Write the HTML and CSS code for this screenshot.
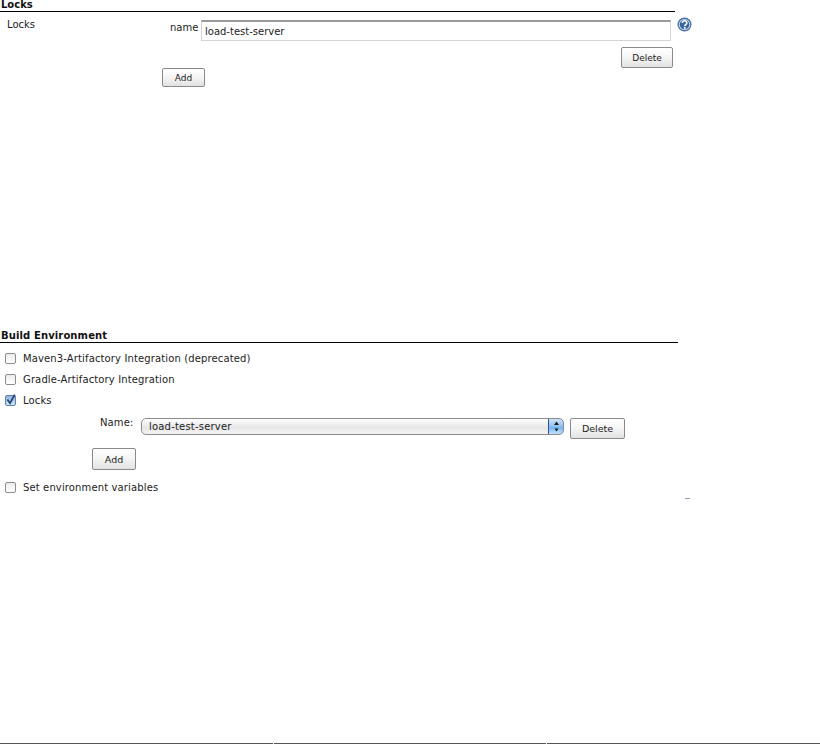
FILE: index.html
```html
<!DOCTYPE html>
<html lang="en">
<head>
<meta charset="utf-8">
<title>Locks configuration</title>
<link rel="stylesheet" href="styles.css">
</head>
<body>
<div class="page">
  <section class="locks">
    <h2 class="heading heading-locks">Locks</h2>
    <div class="locks-body">
      <div class="locks-label">Locks</div>
      <div class="locks-fields">
        <div class="name-row">
          <label class="name-label">name</label>
          <input class="name-input" type="text" value="load-test-server">
          <svg class="help" width="15" height="15" viewBox="0 0 15 15" aria-hidden="true">
            <circle cx="7.5" cy="7.5" r="7" fill="#4a72ad"/>
            <circle cx="7.5" cy="7.5" r="5.6" fill="#dfe8f4"/>
            <circle cx="7.5" cy="7.5" r="4.8" fill="#3a659f"/>
            <path d="M5.3 5.9c0-2.8 4.5-2.8 4.5 0 0 1.7-2 1.6-2 3.1" fill="none" stroke="#fff" stroke-width="1.6"/>
            <rect x="6.9" y="9.9" width="1.8" height="1.8" fill="#fff"/>
          </svg>
        </div>
        <div class="delete-row"><button class="btn btn-delete-top" type="button">Delete</button></div>
        <button class="btn btn-add-top" type="button">Add</button>
      </div>
    </div>
  </section>

  <section class="build">
    <h2 class="heading heading-build">Build Environment</h2>
    <div class="check-row check-first"><span class="box"></span><span>Maven3-Artifactory Integration (deprecated)</span></div>
    <div class="check-row"><span class="box"></span><span>Gradle-Artifactory Integration</span></div>
    <div class="check-row">
      <span class="box box-on">
        <svg width="11" height="12" viewBox="0 0 11 12" aria-hidden="true"><path d="M2.4 5.6 5 9.2 9.8 0.6" fill="none" stroke="#20406f" stroke-width="1.7"/></svg>
      </span>
      <span>Locks</span>
    </div>
    <div class="lock-select-row">
      <span class="select-label">Name:</span>
      <div class="select">
        <span class="select-text">load-test-server</span>
        <span class="select-arrows">
          <svg width="7" height="11" viewBox="0 0 7 11" aria-hidden="true"><path d="M3.5 0.5 6 4H1zM3.5 10.5 1.5 7.5h4z" fill="#1a1a1a"/></svg>
        </span>
      </div>
      <button class="btn btn-delete-bottom" type="button">Delete</button>
    </div>
    <button class="btn btn-add-bottom" type="button">Add</button>
    <div class="check-row check-last"><span class="box"></span><span>Set environment variables</span></div>
    <div class="help-sliver"></div>
  </section>

  <div class="footer-line">
    <span class="footer-seg"></span>
    <span class="footer-seg"></span>
    <span class="footer-seg"></span>
  </div>
</div>
</body>
</html>
```

FILE: styles.css
```css
* { box-sizing: border-box; }
html, body { margin: 0; padding: 0; background: #fff; }
body {
  font-family: "DejaVu Sans", Verdana, sans-serif;
  font-size: 10px;
  color: #222;
}
.page {
  width: 820px;
  height: 744px;
  display: flex;
  flex-direction: column;
  overflow: hidden;
}
.locks { height: 329px; }
.heading {
  margin: 0;
  font-size: 10px;
  font-weight: bold;
  color: #111;
  border-bottom: 1px solid #000;
}
.heading-locks { width: 675px; height: 12px; padding-left: 1px; line-height: 10px; }
.heading-build { width: 678px; height: 14px; padding-left: 1px; line-height: 13px; letter-spacing: .12px; }
.locks-body { display: flex; }
.locks-label { width: 162px; padding: 7px 0 0 7px; line-height: 12px; }
.locks-fields { flex: none; width: 530px; }
.name-row { display: flex; align-items: flex-start; padding-top: 8px; }
.name-label { width: 36px; padding: 1px 3px 0 8px; line-height: 14px; }
.name-input {
  width: 471px;
  height: 21px;
  margin: 0 3px;
  padding: 0 3px;
  border: 1px solid #d4d4d4;
  border-top: 2px solid #9a9a9a;
  font: 10px "DejaVu Sans", Verdana, sans-serif;
  color: #222;
  background: #fff;
  outline: 0;
}
.help { margin: -3px 0 0 3px; flex: none; }
.delete-row { display: flex; justify-content: flex-end; width: 511px; padding-top: 6px; }
.btn {
  display: block;
  padding: 0;
  font: 9px "DejaVu Sans", Verdana, sans-serif;
  color: #222;
  border: 1px solid #8a8a8a;
  border-radius: 2px;
  background: linear-gradient(#fff, #f6f6f6 45%, #e2e2e2);
}
.btn-delete-top { width: 52px; height: 21px; }
.btn-add-top { width: 43px; height: 19px; }
.check-row {
  display: flex;
  align-items: center;
  height: 21px;
  gap: 7px;
  padding-left: 5px;
  letter-spacing: .13px;
}
.check-first { margin-top: 5px; }
.box {
  width: 11px;
  height: 11px;
  flex: none;
  border: 1px solid #8d8d8d;
  border-radius: 2px;
  background: linear-gradient(#ececec, #fff);
  display: flex;
}
.box svg { margin: -2px 0 0 -1px; flex: none; }
.box-on { background: linear-gradient(#8fb3dc, #cfe2f6); border-color: #5f82ab; }
.lock-select-row { display: flex; align-items: flex-start; padding: 7px 0 0 100px; height: 37px; }
.select-label { width: 41px; line-height: 12px; margin-top: -1px; letter-spacing: .1px; }
.select {
  width: 423px;
  height: 17px;
  display: flex;
  justify-content: space-between;
  border: 1px solid #8c8c8c;
  border-radius: 5px;
  background: linear-gradient(#fff, #e6e6e6 55%, #f4f4f4);
  overflow: hidden;
}
.select-text { padding-left: 7px; line-height: 16px; font-size: 10px; letter-spacing: .2px; }
.select-arrows {
  width: 16px;
  margin: -1px -1px -1px 0;
  display: flex;
  align-items: center;
  justify-content: center;
  background: linear-gradient(#cfe3f8, #8fc0f2 50%, #6fb2f3 55%, #c5e4fc);
  border: 1px solid #2f4f9a;
  border-radius: 0 5px 5px 0;
}
.btn-delete-bottom { width: 55px; height: 21px; margin-left: 6px; font-size: 9.5px; }
.btn-add-bottom { width: 44px; height: 22px; margin-left: 92px; font-size: 9.5px; }
.check-last { margin-top: 7px; }
.help-sliver { width: 5px; height: 1px; margin-left: 685px; background: #8aa3cc; }
.footer-line { display: flex; gap: 1px; margin-top: auto; height: 1px; }
.footer-seg { flex: 1; background: #555; }
```
